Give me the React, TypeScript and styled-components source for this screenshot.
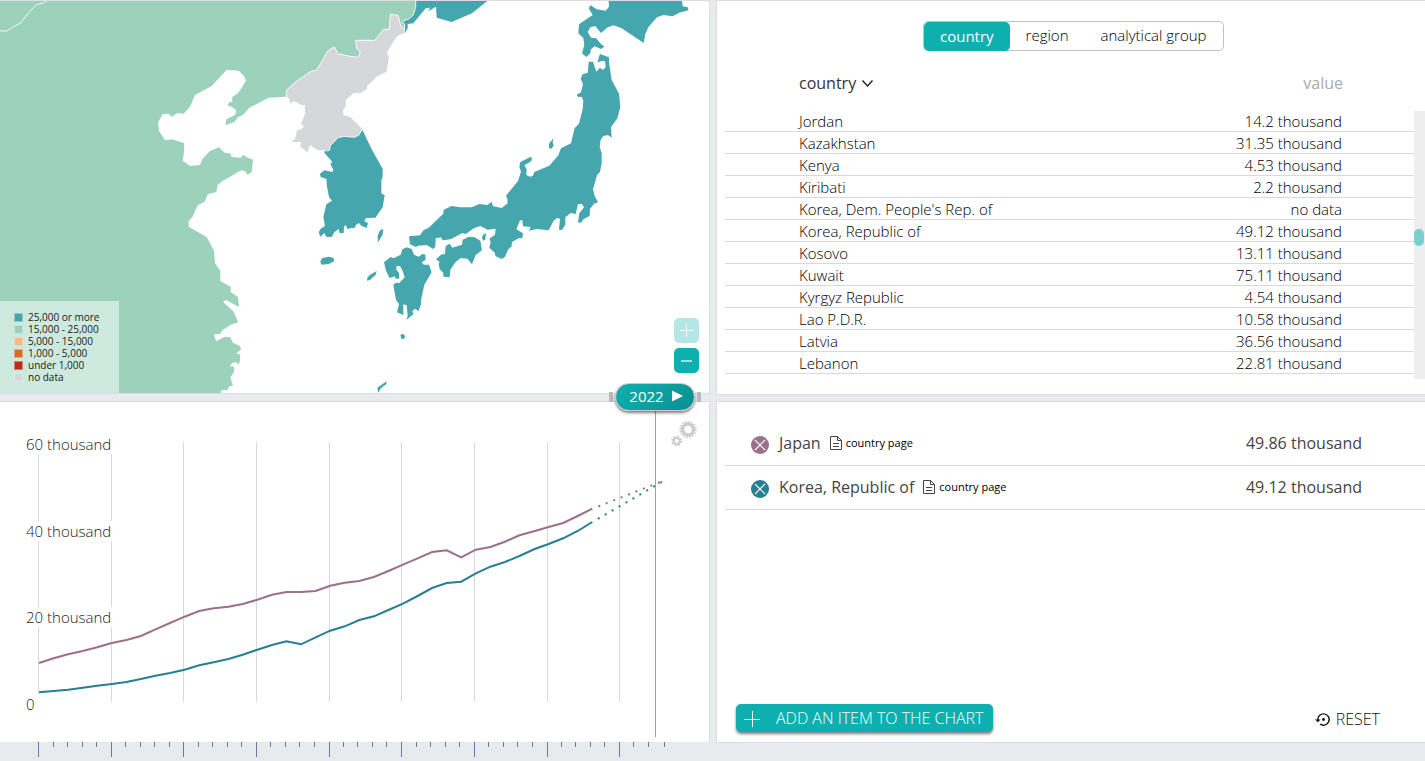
import React from "react";
import styled, { createGlobalStyle } from "styled-components";
import { MdSettingsBackupRestore } from "react-icons/md";

const color = {
  teal: "#0dafaf",
  land1: "#46a6ae",
  land2: "#9cd2bb",
  noData: "#d5d7db",
  page: "#e7ebee",
  edge: "#dcdde0",
  line: "#d9d9d9",
  japan: "#9c6f8b",
  korea: "#277f93",
};

const GlobalStyle = createGlobalStyle`
  * { box-sizing: border-box; }
  body {
    margin: 0;
    background: ${color.page};
    color: #111;
    font-family: "Open Sans", sans-serif;
    font-weight: 300;
  }
  button { font: inherit; color: inherit; border: 0; background: none; padding: 0; cursor: pointer; }
`;

const Page = styled.main`
  display: grid;
  grid-template-columns: 710fr 709fr;
  column-gap: 6px;
  align-items: start;
`;

const Column = styled.div<{ $gap: number }>`
  display: flex;
  flex-direction: column;
  gap: ${(p) => p.$gap}px;
  min-width: 0;
`;

const Panel = styled.section<{ $side: "left" | "right"; $open?: boolean }>`
  position: relative;
  background: #fff;
  border: 0 solid ${color.edge};
  border-top-width: 1px;
  border-bottom-width: ${(p) => (p.$open ? 0 : 1)}px;
  ${(p) => (p.$side === "left" ? "border-right-width: 1px;" : "border-left-width: 1px;")}
`;

const Drawing = styled.svg`
  display: block;
  width: 100%;
  height: auto;
`;

/* ---------- map ---------- */

const Legend = styled.ul`
  position: absolute;
  left: 0;
  bottom: 0;
  margin: 0;
  padding: 10px 19px 10px 14px;
  width: 119px;
  list-style: none;
  background: rgba(255, 255, 255, 0.5);
  color: #222;
  font-size: 10px;
  font-weight: 400;
  line-height: 12px;
`;

const LegendItem = styled.li`
  display: flex;
  align-items: center;
  gap: 5px;
  white-space: nowrap;
`;

const Swatch = styled.span<{ $color: string }>`
  width: 9px;
  height: 9px;
  background: ${(p) => p.$color};
  border: 1px solid rgba(255, 255, 255, 0.4);
`;

const ZoomControls = styled.div`
  position: absolute;
  right: 10px;
  bottom: 20px;
  display: flex;
  flex-direction: column;
  gap: 5px;
`;

const ZoomButton = styled.button<{ $faded?: boolean }>`
  width: 25px;
  height: 25px;
  border-radius: 5px;
  background: ${color.teal};
  opacity: ${(p) => (p.$faded ? 0.3 : 1)};
  svg { display: block; }
`;

const legend = [
  { label: "25,000 or more", color: color.land1 },
  { label: "15,000 - 25,000", color: color.land2 },
  { label: "5,000 - 15,000", color: "#f5b88d" },
  { label: "1,000 - 5,000", color: "#d96b22" },
  { label: "under 1,000", color: "#bc2b17" },
  { label: "no data", color: color.noData },
];

const china =
  "0,1 415.7,1 415.7,6.7 413.3,15 409.3,18.7 402.3,21.3 404.3,24 404,29 401,26.7 398,15.3 390.3,14.3 389.3,29.3 383.3,29.3 375,40.3 355.7,40.3 356.7,48.3 360.3,52.7 358,57.3 350,56.3 338,53.7 334.3,47 328,50.7 317,69.7 310,72 295.7,82 286.3,90.3 286.3,96.7 268.7,97.7 249,108 243.3,114.7 237.7,117.3 234.3,122.3 225.3,125 226.3,119.3 235.3,114.7 236.3,110.3 231.7,106.7 227.3,105.3 229.3,102.3 232.3,101.7 232.3,97 238.3,93 246,80.7 244,76 238.7,70.7 226.7,69.7 211.7,86 195,95 190.3,106.3 183.7,113.7 177,113.3 171.7,116.7 168.7,113.7 162.7,114 158,122.7 159,131 165,140.3 171.7,139.3 184,143 184.3,150 182.7,160.7 190.3,166 200,165 202.3,159 209.7,151.3 219,147.3 225,153 230,153.3 231.7,157 240.7,157.7 243.3,154.7 246.7,157.3 253,159.7 251.7,172 247.7,174.7 245.3,171.3 241.3,170.3 223,180.7 217.7,184.7 216.3,192 207.7,194.3 204.7,201.7 197.7,205.3 192.3,217.3 188.7,221 188.7,226.7 206.7,237 214,250.7 215,263.3 220.3,271 220.3,281 230.7,286.7 230.7,292 238,297 239,307 226,300 223,302 233.3,311.3 238.3,322.3 230.7,324.7 222.3,330.3 220,334.3 216,334 213.7,335 216.3,341.3 224.3,337 230,337 233,342.7 239.3,345.7 241.3,348.7 236.3,353.7 239.7,354 240.3,359.3 238.7,364.7 236,362 232.3,363 230,366.3 234.3,366.7 234,371.7 230.3,377.7 233,385.3 229,386.7 226.7,391 225,389.7 221,390.7 221,393 0,393";

const russia =
  "437,3 437,20 430,45 418,56 397,64 404,73 405,98 413,85 413,72 430,70 467,25 480,23 475,34 498,20 500,53 545,66 606,40 652,3";

const northKorea =
  "404,90 393,80 384,46 361,43 358,88 340,88 315,121 257,121 260,145 271,158 264,172 240,169 204,161 193,141 174,152 141,209 120,216 77,246 49,271 49,289 58,296 61,311 71,303 96,316 106,315 104,325 106,340 93,373 103,379 90,389 81,391 76,415 65,426 93,426 91,440 112,457 120,435 144,451 162,450 173,453 179,450 181,437 204,413 222,409 253,412 266,406 277,387 240,350 220,346 219,331 228,317 227,299 250,280 273,279 289,268 292,257 323,228 350,215 357,170 350,158 370,125 383,107 405,98";

const southern = [
  "277,29 305,88 338,147 338,172 334,180 334,220 344,226 338,262 316,293 288,294 283,303 294,310 290,324 275,318 266,309 257,316 255,323 242,324 233,328 227,315 222,320 221,339 208,339 206,327 193,337 186,350 169,351 163,339 151,350 146,337 152,326 165,318 160,290 169,253 186,242 177,231 171,200 169,177 152,171 150,161 163,151 187,156 190,149 181,132 187,126 163,98 164,91 179,90 181,77 204,53 222,49 253,52 266,46",
  "151,424 157,414 176,410 190,413 193,424 176,432 154,434",
  "330,331 340,327 338,344 323,368 323,347",
  "292,473 300,464 320,453 317,464 300,480 291,482",
  "342,427 362,411 371,415 392,404 397,388 410,382 425,387 432,404 446,410 457,402 466,404 467,419 455,427 461,434 477,434 485,457 463,494 453,541 453,553 446,573 434,566 427,574 431,582 409,600 413,588 410,556 400,553 400,585 381,577 387,552 378,540 370,494 378,488 388,489 404,472 398,453 390,438 379,439 379,449 387,459 388,475 378,477 374,469 359,474 348,452",
  "391,645 398,641 406,648 402,657 394,656",
  "322,803 350,784 349,793 333,804 325,818",
  "498,418 515,403 525,403 527,378 539,371 547,383 576,374 578,359 597,350 614,352 631,362 636,391 617,405 606,433 592,416 572,414 556,427 541,449 539,472 520,470 520,458 509,448 506,432 509,426",
  "636,352 641,343 648,340 646,359 639,362",
];

const honshuAndNorth = [
  "27,709 60,706 71,690 86,683 130,641 131,629 155,618 182,622 215,622 238,612 262,615 275,605 279,619 305,624 322,611 323,599 318,587 354,543 363,515 358,500 361,486 391,471 396,473 394,484 373,496 380,508 379,525 390,530 399,527 403,516 448,497 475,466 483,445 513,430 524,384 537,371 548,328 550,302 545,290 534,291 530,284 543,277 549,252 542,236 548,223 563,218 566,185 579,185 589,215 600,203 609,210 617,201 615,184 606,183 592,187 600,162 627,172 627,187 635,240 657,281 661,320 652,355 633,382 635,413 624,405 610,408 602,419 599,441 605,458 605,491 600,515 591,526 579,568 584,588 594,607 582,611 570,627 569,648 551,657 542,669 534,666 538,640 552,622 546,612 534,612 527,642 512,639 496,652 496,674 486,690 477,689 480,656 471,654 461,662 446,691 410,687 387,692 392,681 369,679 367,661 360,661 349,688 369,700 367,715 357,714 336,726 335,739 324,749 315,770 305,777 286,768 285,759 268,743 272,725 268,716 285,704 287,686 263,689 241,678 223,684 197,702 187,699 152,718 128,721 122,712 107,715 106,740 100,747 80,735 54,737 48,741 30,733",
  "447,431 461,414 458,427 461,437 454,446 447,445",
  "626,3 627,20 617,32 590,28 572,16 566,25 578,45 537,73 535,100 550,114 553,135 546,160 559,171 570,161 573,148 584,139 603,147 613,140 600,129 589,115 573,113 563,96 571,82 586,78 603,99 623,82 641,76 665,85 731,129 736,102 745,82 771,52 790,45 818,49 838,38 865,31 864,22 848,19 846,3",
];

function MapPanel() {
  return (
    <Panel $side="left">
      <Drawing viewBox="0 1 709 392" role="img" aria-label="Map of East Asia">
        <polygon points={china} fill={color.land2} />
        <g transform="translate(270 0) scale(0.33333)">
          <polygon points={russia} fill={color.land1} />
          <polygon points={northKorea} fill={color.noData} />
        </g>
        <g transform="translate(270 120) scale(0.33333)" fill={color.land1}>
          {southern.map((points) => <polygon key={points} points={points} />)}
        </g>
        <g transform="translate(400 0) scale(0.33333)" fill={color.land1}>
          {honshuAndNorth.map((points) => <polygon key={points} points={points} />)}
        </g>
        <g fill="none" stroke="#fff" strokeOpacity="0.85">
          <polyline points="0,30.7 6,31.3 21.3,22.3 28.3,13 36.7,4.7 43.3,3 46.7,0.7" />
          <polyline points="415.7,1 415.7,6.7 413.3,15 409.3,18.7 402.3,21.3 404.3,24 404.6,29.5 401,26.7 398,15.3 390.3,14.3 389.3,29.3 383.3,29.3 375,40.3 355.7,40.3 356.7,48.3 360.3,52.7 358,57.3 350,56.3 338,53.7 334.3,47 328,50.7 317,69.7 310,72 295.7,82 286.3,90.3 286.3,96.7" />
          <polyline points="324.5,150.5 327.7,151 329.7,150 330.3,145.7 338,137.7 344,136.3 354.3,137.3 358.7,135.3 362.3,129" />
        </g>
      </Drawing>
      <Legend>
        {legend.map((item) => (
          <LegendItem key={item.label}>
            <Swatch $color={item.color} />
            {item.label}
          </LegendItem>
        ))}
      </Legend>
      <ZoomControls>
        <ZoomButton $faded aria-label="Zoom in">
          <svg width="25" height="25" stroke="#fff"><path d="M6 12.5h13M12.5 6v13" /></svg>
        </ZoomButton>
        <ZoomButton aria-label="Zoom out">
          <svg width="25" height="25" stroke="#fff" strokeOpacity="0.6"><path d="M7 13h11" strokeWidth="2" /></svg>
        </ZoomButton>
      </ZoomControls>
    </Panel>
  );
}

/* ---------- chart ---------- */

const AxisLabel = styled.text`
  font-size: 15px;
  fill: #222;
`;

const YearSlider = styled.div`
  position: absolute;
  top: -19px;
  right: 8px;
  display: flex;
  align-items: center;
  gap: 2px;
`;

const Handle = styled.span`
  width: 4px;
  height: 10px;
  background: #b7b9bb;
`;

const YearButton = styled.button`
  display: flex;
  align-items: center;
  justify-content: center;
  gap: 8px;
  width: 80px;
  height: 28px;
  padding: 0 0 2px 2px;
  border: 1px solid #c8cccc;
  border-radius: 14px;
  background: linear-gradient(135deg, #0fb0ae, #0b8f90);
  box-shadow: 0 2px 3px rgba(0, 0, 0, 0.5);
  color: #fff;
  font-size: 15px;
  font-weight: 400;
  line-height: 20px;
`;

const SettingsButton = styled.button`
  position: absolute;
  top: 17px;
  right: 11px;
  width: 28px;
  height: 28px;
  svg { display: block; }
`;

const tickX = (i: number) => Math.floor(38.5 + i * 14.52);
const yearLine = (values: number[]) =>
  values.map((v, i) => `${(39 + i * 14.56).toFixed(1)},${(420 + v / 3).toFixed(1)}`).join(" ");

const japan = [
  729, 715, 703, 693, 682, 669, 660, 648, 628, 609, 590, 573, 565, 560, 552, 539, 524, 516, 516, 513, 497, 488, 483,
  471, 453, 434, 415, 396, 391, 412, 389, 381, 365, 346, 334, 321, 309, 288, 266,
];
const korea = [
  817, 813, 809, 803, 797, 792, 786, 777, 767, 759, 749, 736, 727, 717, 704, 689, 675, 664, 673, 652, 632, 619, 600,
  589, 570, 551, 528, 504, 489, 485, 460, 440, 426, 408, 388, 372, 355, 333, 306,
];

const gridLines = [38, 111, 183, 256, 329, 401, 474, 547, 619];
const axis = [
  { y: 444, text: "60 thousand", width: 87 },
  { y: 531, text: "40 thousand", width: 87 },
  { y: 617, text: "20 thousand", width: 87 },
  { y: 704, text: "0", width: 14 },
];

function ChartPanel() {
  return (
    <Panel $side="left" $open>
      <Drawing viewBox="0 402 709 340" role="img" aria-label="Line chart of Japan and Korea">
        {gridLines.map((x) => (
          <rect key={x} x={x} y="442" width="1" height="260" fill={color.line} />
        ))}
        {axis.map((a) => (
          <g key={a.text}>
            <rect x="26" y={a.y - 10} width={a.width} height="20" fill="#fff" />
            <AxisLabel x="26" y={a.y + 6}>{a.text}</AxisLabel>
          </g>
        ))}
        <g fill="none" strokeWidth="2">
          <polyline points={yearLine(japan)} stroke={color.japan} />
          <polyline points={yearLine(korea)} stroke={color.korea} />
          <g strokeDasharray="2 6" strokeDashoffset="2">
            <path d="M592.7 508.7L662 481.3" stroke={color.japan} />
            <path d="M592.7 522L662.5 481.5" stroke={color.korea} />
          </g>
        </g>
        <rect x="655" y="411" width="1" height="326" fill="#74b3b3" />
      </Drawing>
      <YearSlider>
        <Handle />
        <YearButton>
          2022
          <svg width="11" height="12" fill="#fff"><path d="M0 0.5L11 6L0 11.5Z" /></svg>
        </YearButton>
        <Handle />
      </YearSlider>
      <SettingsButton aria-label="Chart settings">
        <svg width="28" height="28" fill="none" stroke="#ccc">
          <circle cx="18" cy="10.5" r="5.5" strokeWidth="3.4" />
          <circle cx="18" cy="10.5" r="7.9" strokeWidth="1.8" strokeDasharray="1.55 1.55" />
          <circle cx="6.7" cy="22" r="3.1" strokeWidth="2" />
          <circle cx="6.7" cy="22" r="4.6" strokeWidth="1.8" strokeDasharray="1.8 1.81" />
        </svg>
      </SettingsButton>
    </Panel>
  );
}

function YearTicks() {
  const years = Array.from({ length: 44 }, (_, i) => i);
  return (
    <Drawing viewBox="0 742 710 15" aria-hidden="true">
      {years.map((i) => (
        <rect
          key={i}
          x={i % 5 === 0 ? gridLines[i / 5] : i === 43 ? 664 : tickX(i)}
          y="742"
          width="1"
          height={i % 5 === 0 ? 15 : 5}
          fill="#7674a4"
        />
      ))}
    </Drawing>
  );
}

/* ---------- country table ---------- */

const Tabs = styled.div`
  display: flex;
  width: max-content;
  height: 30px;
  margin: 20px auto 0 206px;
  border: 1px solid #bfc1c3;
  border-radius: 5px;
`;

const Tab = styled.button<{ $active?: boolean }>`
  padding: 0 16px 2px;
  height: ${(p) => (p.$active ? 29 : 28)}px;
  border-radius: 5px;
  background: ${(p) => (p.$active ? color.teal : "transparent")};
  color: ${(p) => (p.$active ? "#fff" : "#000")};
  font-size: 15px;
  font-weight: ${(p) => (p.$active ? 400 : 300)};
  line-height: 26px;
`;

const ListArea = styled.div`
  display: flex;
  padding: 9px 0 15px 8px;
`;

const CountryTable = styled.table`
  flex: 1;
  align-self: flex-start;
  border-collapse: separate;
  border-spacing: 0;
  font-size: 15px;
  line-height: 19px;
`;

const HeadCell = styled.th<{ $end?: boolean }>`
  height: 50px;
  padding: ${(p) => (p.$end ? "0 71px 4px 0" : "0 0 4px 74px")};
  text-align: ${(p) => (p.$end ? "right" : "left")};
  font-size: 16px;
  font-weight: 400;
  line-height: 21px;
  color: ${(p) => (p.$end ? "#aaa" : "#333")};
`;

const SortButton = styled.button`
  display: inline-flex;
  align-items: center;
  gap: 5px;
`;

const Cell = styled.td<{ $end?: boolean }>`
  height: 22px;
  padding: ${(p) => (p.$end ? "2px 72px 0 0" : "2px 0 0 74px")};
  border-bottom: 1px solid ${color.line};
  color: #000;
  text-align: ${(p) => (p.$end ? "right" : "left")};
`;

const ScrollTrack = styled.div`
  width: 11px;
  height: 268px;
  margin-top: 51px;
  padding-top: 118px;
  background: #eee;
`;

const ScrollThumb = styled.div`
  width: 10px;
  height: 17px;
  border-radius: 5px;
  background: #7bcfcf;
`;

const countries: [string, string][] = [
  ["Jordan", "14.2 thousand"],
  ["Kazakhstan", "31.35 thousand"],
  ["Kenya", "4.53 thousand"],
  ["Kiribati", "2.2 thousand"],
  ["Korea, Dem. People's Rep. of", "no data"],
  ["Korea, Republic of", "49.12 thousand"],
  ["Kosovo", "13.11 thousand"],
  ["Kuwait", "75.11 thousand"],
  ["Kyrgyz Republic", "4.54 thousand"],
  ["Lao P.D.R.", "10.58 thousand"],
  ["Latvia", "36.56 thousand"],
  ["Lebanon", "22.81 thousand"],
];

function CountryPanel() {
  return (
    <Panel $side="right">
      <Tabs>
        <Tab $active>country</Tab>
        <Tab>region</Tab>
        <Tab>analytical group</Tab>
      </Tabs>
      <ListArea>
        <CountryTable>
          <thead>
            <tr>
              <HeadCell>
                <SortButton>
                  country
                  <svg width="13" height="9" fill="none" stroke="#222" strokeWidth="1.4"><path d="M1.5 1.5L6.5 7L11.5 1.5" /></svg>
                </SortButton>
              </HeadCell>
              <HeadCell $end>value</HeadCell>
            </tr>
          </thead>
          <tbody>
            {countries.map(([name, value]) => (
              <tr key={name}>
                <Cell>{name}</Cell>
                <Cell $end>{value}</Cell>
              </tr>
            ))}
          </tbody>
        </CountryTable>
        <ScrollTrack>
          <ScrollThumb />
        </ScrollTrack>
      </ListArea>
    </Panel>
  );
}

/* ---------- selected items ---------- */

const Selection = styled.ul`
  margin: 0;
  padding: 20px 0 0 8px;
  list-style: none;
`;

const SelectionItem = styled.li`
  display: flex;
  align-items: center;
  height: 44px;
  padding: 0 63px 2px 26px;
  border-bottom: 1px solid ${color.line};
  color: #444;
  font-size: 16px;
  font-weight: 400;
  line-height: 22px;
`;

const RemoveButton = styled.button<{ $color: string }>`
  width: 18px;
  height: 18px;
  margin: 5px 10px 0 0;
  border-radius: 50%;
  background: ${(p) => p.$color};
  svg { display: block; }
`;

const PageLink = styled.a`
  display: inline-flex;
  align-items: center;
  gap: 4px;
  margin-left: 9px;
  color: #000;
  font-size: 11px;
  font-weight: 400;
  text-decoration: none;
`;

const Amount = styled.span`
  margin-left: auto;
`;

const Footer = styled.footer`
  display: flex;
  align-items: center;
  justify-content: space-between;
  padding: 194px 45px 10px 19px;
`;

const AddButton = styled.button`
  display: flex;
  align-items: center;
  gap: 15px;
  height: 28px;
  padding: 0 9px 0 8px;
  border-radius: 5px;
  background: ${color.teal};
  box-shadow: 0 2px 3px rgba(0, 0, 0, 0.5);
  color: #fff;
  font-size: 16px;
`;

const ResetButton = styled.button`
  display: flex;
  align-items: center;
  gap: 4px;
  padding-top: 2px;
  font-size: 16px;
`;

const selected = [
  { name: "Japan", value: "49.86 thousand", color: color.japan },
  { name: "Korea, Republic of", value: "49.12 thousand", color: color.korea },
];

function SelectionPanel() {
  return (
    <Panel $side="right">
      <Selection>
        {selected.map((item) => (
          <SelectionItem key={item.name}>
            <RemoveButton $color={item.color} aria-label={`Remove ${item.name}`}>
              <svg width="18" height="18" stroke="#fff" strokeWidth="1.2"><path d="M4 4L14 14M14 4L4 14" /></svg>
            </RemoveButton>
            {item.name}
            <PageLink href="#">
              <svg width="12" height="14" fill="none" stroke="#444">
                <path d="M0.5 0.5H7.5L11.5 4.5V13.5H0.5ZM7.5 0.5V4.5H11.5M3 7.5H9M3 10.5H9" />
              </svg>
              country page
            </PageLink>
            <Amount>{item.value}</Amount>
          </SelectionItem>
        ))}
      </Selection>
      <Footer>
        <AddButton>
          <svg width="17" height="17" stroke="#fff"><path d="M0 9.5H16M8.5 1V17" /></svg>
          ADD AN ITEM TO THE CHART
        </AddButton>
        <ResetButton>
          <MdSettingsBackupRestore size={17} />
          RESET
        </ResetButton>
      </Footer>
    </Panel>
  );
}

export default function App() {
  return (
    <>
      <GlobalStyle />
      <Page>
        <Column $gap={7}>
          <MapPanel />
          <div>
            <ChartPanel />
            <YearTicks />
          </div>
        </Column>
        <Column $gap={6}>
          <CountryPanel />
          <SelectionPanel />
        </Column>
      </Page>
    </>
  );
}
